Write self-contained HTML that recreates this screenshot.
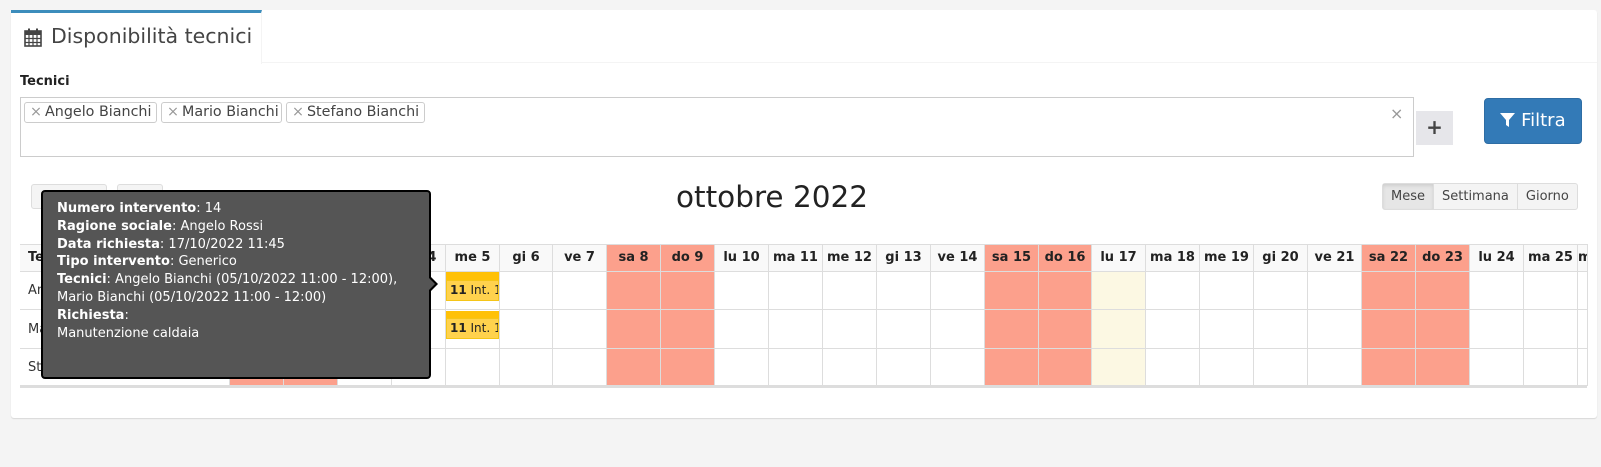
<!DOCTYPE html>
<html><head><meta charset="utf-8"><style>
*{box-sizing:border-box;margin:0;padding:0}
body{width:1601px;height:467px;background:#f4f4f4;font-family:"DejaVu Sans","Liberation Sans",sans-serif;color:#333;position:relative;overflow:hidden}
.abs{position:absolute}
.panel{left:11px;top:10px;width:1586px;height:408px;background:#fff;border-radius:3px;box-shadow:0 1px 1px rgba(0,0,0,.12)}
.tabbar{left:11px;top:10px;width:1586px;height:53px;border-bottom:1px solid #f4f4f4}
.tab{left:11px;top:10px;width:251px;height:54px;background:#fff;border-top:3px solid #3c8dbc;border-right:1px solid #f4f4f4}
.title{left:51px;top:24px;font-size:20.5px;color:#444}
.lbl{left:20px;top:74px;font-size:13px;font-weight:bold;color:#222}
.inp{left:20px;top:97px;width:1394px;height:60px;border:1px solid #ccc;background:#fff}
.tag{top:102px;height:21px;border:1px solid #ccc;border-radius:3px;background:#fff;font-size:14.3px;line-height:19px;padding:0 5px;color:#444;white-space:nowrap}
.tag b{color:#999;font-weight:normal;margin-right:3px}
.plus{left:1416px;top:111px;width:37px;height:34px;background:#e6e6ea;font-size:20px;font-weight:bold;text-align:center;line-height:32px;color:#444}
.filtra{left:1484px;top:98px;width:98px;height:46px;background:#337ab7;border:1px solid #2e6da4;border-radius:4px;color:#fff;font-size:18px;line-height:44px;text-align:center}
.grp{left:1382px;top:183px;height:27px;border:1px solid #ddd;border-radius:3px;background:#f4f4f4;display:flex;font-size:13px;color:#444}
.grp div{line-height:25px;padding:0 8px;border-left:1px solid #ddd}
.grp div:first-child{border-left:none;background:#e6e6e6;box-shadow:inset 0 2px 3px rgba(0,0,0,.1)}
.nb{top:184px;height:25px;border:1px solid #ddd;border-radius:3px;background:#f4f4f4}
.month{left:676px;top:180px;font-size:29.5px;color:#222}
.c{position:absolute;border-right:1px solid #ddd;border-bottom:1px solid #ddd}
.h{font-size:13px;font-weight:bold;text-align:center;line-height:26px;color:#222;border-top:1px solid #ddd}
.we{background:#fca08c}
.td{background:#fcf8e3}
.ev{position:absolute;left:446px;width:53px;background:#ffc107}
.ev div{position:absolute;left:0;right:0;bottom:0;height:21px;background:#ffd24d;border:1px solid #f5c518;font-size:12px;line-height:19px;padding-left:3px;overflow:hidden;white-space:nowrap;color:#222}
.tip{left:41px;top:190px;width:390px;height:189px;background:#555;border:2px solid #000;border-radius:4px;color:#fff;font-size:13px;line-height:17.8px;padding:8px 0 0 14px}
.arrow{left:430px;top:276px;width:0;height:0;border-top:8px solid transparent;border-bottom:8px solid transparent;border-left:8px solid #000}
.arrow2{left:429px;top:278px;width:0;height:0;border-top:6px solid transparent;border-bottom:6px solid transparent;border-left:6px solid #555}
</style></head><body>
<div class="abs panel"></div>
<div class="abs tabbar"></div>
<div class="abs tab"></div>
<svg class="abs" style="left:24px;top:28px" width="18" height="19" viewBox="0 0 18 19"><rect x="1" y="3" width="16" height="15" fill="none" stroke="#444" stroke-width="1.6"/><rect x="1" y="3" width="16" height="4" fill="#444"/><path d="M1 10.5H17M1 14.5H17M5 7V18M9 7V18M13 7V18" stroke="#444" stroke-width="1.2"/><rect x="4" y="0.5" width="2" height="4.5" fill="#444"/><rect x="12" y="0.5" width="2" height="4.5" fill="#444"/></svg>
<div class="abs title">Disponibilità tecnici</div>
<div class="abs lbl">Tecnici</div>
<div class="abs inp"></div>
<div class="abs tag" style="left:24px;width:133px"><b>×</b>Angelo Bianchi</div>
<div class="abs tag" style="left:161px;width:121px"><b>×</b>Mario Bianchi</div>
<div class="abs tag" style="left:286px;width:139px"><b>×</b>Stefano Bianchi</div>
<div class="abs" style="left:1390px;top:104px;font-size:16px;color:#999">×</div>
<div class="abs plus">+</div>
<div class="abs filtra"><svg width="15" height="15" viewBox="0 0 15 15" style="vertical-align:-1px"><path d="M0 1H15L9 8V15L6 13V8Z" fill="#fff"/></svg> Filtra</div>
<div class="abs nb" style="left:31px;width:76px"></div>
<div class="abs nb" style="left:117px;width:46px"></div>
<div class="abs month">ottobre 2022</div>
<div class="abs grp"><div>Mese</div><div>Settimana</div><div>Giorno</div></div>
<div id="tbl"></div>
<div class="abs" style="left:20px;top:386px;width:1567px;height:2px;background:#ddd"></div>
<div class="ev" style="top:272px;height:29px"><div><b>11</b> Int. 14</div></div>
<div class="ev" style="top:311px;height:28px"><div><b>11</b> Int. 14</div></div>
<div class="abs tip"><b>Numero intervento</b>: 14<br><b>Ragione sociale</b>: Angelo Rossi<br><b>Data richiesta</b>: 17/10/2022 11:45<br><b>Tipo intervento</b>: Generico<br><b>Tecnici</b>: Angelo Bianchi (05/10/2022 11:00 - 12:00),<br>Mario Bianchi (05/10/2022 11:00 - 12:00)<br><b>Richiesta</b>:<br>Manutenzione caldaia</div>
<div class="abs arrow"></div><div class="abs arrow2"></div>
<script>
var days=["sa","do","lu","ma","me","gi","ve"],h="",rows=[[272,38],[310,39],[349,37]];
var names=["Angelo Bianchi","Mario Bianchi","Stefano Bianchi"];
h+='<div class="abs" style="left:20px;top:244px;width:1567px;height:28px;background:#f9f9f9"></div>';
h+='<div class="c h" style="left:20px;top:244px;width:210px;height:28px;text-align:left;padding-left:8px">Tecnici</div>';
rows.forEach(function(r,i){h+='<div class="c" style="left:20px;top:'+r[0]+'px;width:210px;height:'+r[1]+'px;font-size:13px;line-height:'+r[1]+'px;padding-left:8px">'+names[i]+'</div>';});
for(var d=1;d<=26;d++){var x=Math.round(230+(d-1)*53.9),w=Math.round(230+d*53.9)-x;if(x+w>1588)w=1588-x;
var cls=(d%7==1||d%7==2)?" we":(d==17?" td":"");
var hc=(d==17)?"":cls;
h+='<div class="c h'+hc+'" style="left:'+x+'px;top:244px;width:'+w+'px;height:28px;overflow:hidden;white-space:nowrap">'+days[(d-1)%7]+' '+d+'</div>';
rows.forEach(function(r){h+='<div class="c'+cls+'" style="left:'+x+'px;top:'+r[0]+'px;width:'+w+'px;height:'+r[1]+'px"></div>';});}
document.getElementById("tbl").innerHTML=h;
</script>
</body></html>
